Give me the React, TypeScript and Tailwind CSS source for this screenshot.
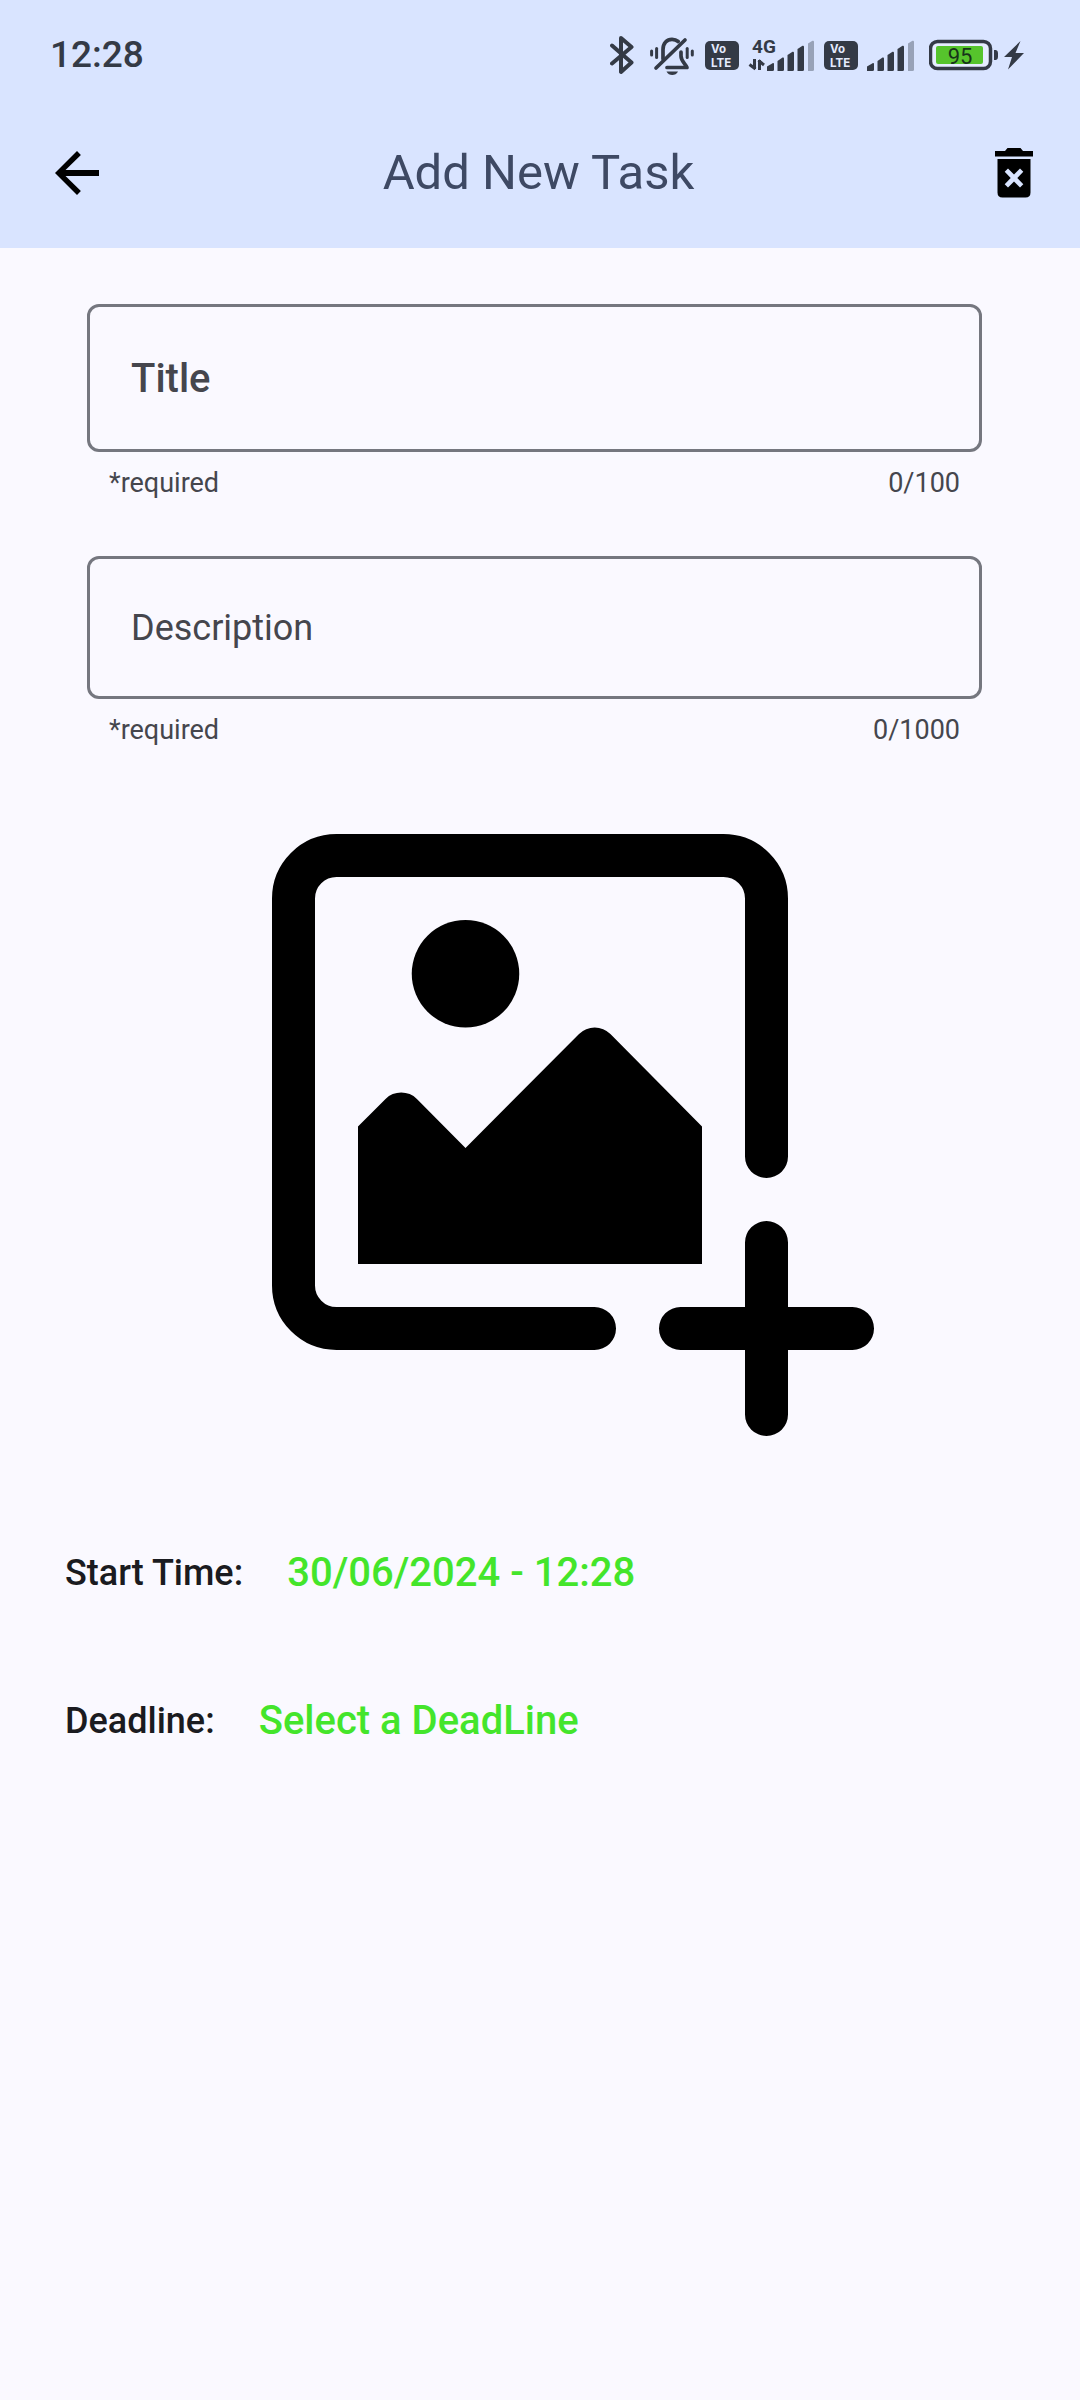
import React, { useState } from "react";

const INK = "#343a46";

function BluetoothIcon() {
  return (
    <svg className="h-12 w-6 shrink-0" viewBox="0 0 24 48" fill="none" stroke={INK} strokeWidth="4" strokeLinejoin="round" strokeLinecap="round" aria-hidden="true">
      <path d="M2 14.500L21.500 31.500L11 41V7L21.500 16L2 32.500" />
    </svg>
  );
}

function BellOffIcon() {
  return (
    <svg className="ml-4 h-12 w-11 shrink-0" viewBox="0 0 44 48" fill="none" stroke={INK} strokeLinecap="round" aria-hidden="true">
      <g strokeWidth="3.700">
        <path d="M13 28V18.500C13 12 17 8.300 22 8.300C24.500 8.300 26.500 9 28.200 10.500" />
        <path d="M31 21V25C31 30 35 32.500 37 36.500H17" strokeLinejoin="round" />
        <path d="M35 9L6 37" />
      </g>
      <path d="M16.500 40.500H28C27 43 24.500 44 22.200 44C20 44 17.500 43 16.500 40.500Z" fill={INK} stroke="none" />
      <g strokeWidth="3">
        <path d="M1.600 20V24" />
        <path d="M6.600 17.500V26.500" />
        <path d="M37.200 17.500V26.500" />
        <path d="M42.300 20V24" />
      </g>
    </svg>
  );
}

function VolteIcon({ className }: { className: string }) {
  return (
    <svg className={className} viewBox="0 0 34 48" aria-label="VoLTE">
      <rect x="0" y="10" width="34" height="29" rx="5" fill={INK} />
      <g fill="#e4ebff" fontFamily="Inter, sans-serif" fontWeight="700" fontSize="11.500">
        <text x="6" y="22">Vo</text>
        <text x="6" y="36">LTE</text>
      </g>
    </svg>
  );
}

function Bars() {
  return (
    <g fill={INK}>
      <path d="M0 40V35.500L6 32Q7 31.800 7 33V38.500Q7 40 5.500 40Z" />
      <path d="M10.500 40V30L15.500 26.500Q17 26 17 27.500V38.500Q17 40 15.500 40Z" />
      <path d="M20.500 40V24L25.500 20.800Q27 20.300 27 22V38.500Q27 40 25.500 40Z" />
      <path d="M30.500 40V18L35.500 14.800Q37 14.300 37 16V38.500Q37 40 35.500 40Z" />
      <path d="M41 40V12.500L45.500 9.800Q47 9.300 47 11V38.500Q47 40 45.500 40Z" fill="#98a2b8" />
    </g>
  );
}

function MobileDataIcon() {
  return (
    <svg className="ml-[9px] h-12 w-[67px] shrink-0" viewBox="0 0 67 48" aria-label="4G signal">
      <text x="4" y="22" fontSize="19" fontFamily="Roboto, sans-serif" fontWeight="700" fill={INK}>4G</text>
      <g fill="none" stroke={INK} strokeWidth="3">
        <path d="M6.500 28V38M7.500 38L1.500 33.500" />
        <path d="M11.500 39V29M10.500 29.500L16 34" />
      </g>
      <g transform="translate(19 0)">
        <Bars />
      </g>
    </svg>
  );
}

function SignalIcon() {
  return (
    <svg className="ml-[9px] h-12 w-[47px] shrink-0" viewBox="0 0 47 48" aria-label="Signal">
      <Bars />
    </svg>
  );
}

function BatteryIcon() {
  return (
    <svg className="ml-[15px] h-12 w-[70px] shrink-0" viewBox="0 0 70 48" aria-label="Battery 95 percent">
      <rect x="1.500" y="10.500" width="60" height="27" rx="7" fill="#e6edff" stroke={INK} strokeWidth="3.500" />
      <rect x="7" y="15" width="47" height="18" rx="2" fill="#56c42c" />
      <path d="M65 19H67Q69 19.500 69 22V26Q69 28.500 67 29H65Z" fill={INK} />
      <text x="31" y="32.500" fontSize="22" textAnchor="middle" fontFamily="Roboto, sans-serif" fontWeight="400" fill="#16351a">95</text>
    </svg>
  );
}

function BoltIcon() {
  return (
    <svg className="ml-[5px] h-12 w-5 shrink-0" viewBox="0 0 20 48" aria-hidden="true">
      <path d="M16.500 10L0 26H8L4 38.500L20 22H11.500Z" fill={INK} />
    </svg>
  );
}

function TrashIcon() {
  return (
    <svg className="h-[50px] w-[38px]" viewBox="0 0 38 50" aria-hidden="true">
      <path d="M0 3H10L12.500 0H25.500L28 3H38V8.500H0Z" />
      <path fillRule="evenodd" d="M2.500 11H35.500V44.500Q35.500 49.500 30.500 49.500H7.500Q2.500 49.500 2.500 44.500ZM13 20.500L9.700 23.800L15.700 30L9.700 36.200L13 39.500L19 33.500L25 39.500L28.300 36.200L22.300 30L28.300 23.800L25 20.500L19 26.500Z" />
    </svg>
  );
}

function AddImageIcon() {
  return (
    <svg className="h-auto w-full" viewBox="0 0 14 14" aria-hidden="true">
      <g fill="none" stroke="#000" strokeWidth="1" strokeLinecap="round">
        <path d="M7.500 11.500H1.500A1 1 0 0 1 .5 10.500V1.500A1 1 0 0 1 1.500 .5H10.500A1 1 0 0 1 11.500 1.500V7.500" />
        <path d="M11.500 9.500V13.500M9.500 11.500H13.500" />
      </g>
      <circle cx="4.500" cy="3.250" r="1.250" />
      <path d="M2 6.800L2.640 6.160A.52 .52 0 0 1 3.370 6.160L4.500 7.300L7.140 4.650A.52 .52 0 0 1 7.870 4.650L10 6.800V10H2Z" />
    </svg>
  );
}

type FieldProps = {
  label: string;
  limit: number;
  inputClass: string;
};

function TextField({ label, limit, inputClass }: FieldProps) {
  const [value, setValue] = useState("");
  return (
    <div>
      <input
        type="text"
        aria-label={label}
        required
        maxLength={limit}
        placeholder={label}
        value={value}
        onChange={(e) => setValue(e.target.value)}
        className={inputClass}
      />
      <div className="mt-3 flex justify-between px-[22px] text-[27px] leading-[38px] text-[#45464d]">
        <span>*required</span>
        <span>{value.length}/{limit}</span>
      </div>
    </div>
  );
}

function TimeRow({ label, value }: { label: string; value: string }) {
  return (
    <div className="flex items-center gap-11 font-medium">
      <span className="text-[36px] leading-12 text-[#1a1b20]">{label}</span>
      <button type="button" className="text-[40px] leading-12 text-[#44e52b]">{value}</button>
    </div>
  );
}

export default function App() {
  return (
    <div className="min-h-screen bg-[#faf9ff] font-['Roboto',sans-serif]">
      <header className="bg-[#d9e4ff]">
        <div className="flex h-[109px] items-center justify-between pr-14 pl-[50px]">
          <span className="text-[37px] leading-12 font-medium text-[#343a46]">12:28</span>
          <div className="flex items-center">
            <BluetoothIcon />
            <BellOffIcon />
            <VolteIcon className="ml-[11px] h-12 w-[34px] shrink-0" />
            <MobileDataIcon />
            <VolteIcon className="ml-[9px] h-12 w-[34px] shrink-0" />
            <SignalIcon />
            <BatteryIcon />
            <BoltIcon />
          </div>
        </div>
        <div className="grid h-[139px] grid-cols-[1fr_auto_1fr] items-center pr-[47px] pb-3 pl-11">
          <button type="button" aria-label="Back" className="justify-self-start">
            <svg className="size-[66px]" viewBox="0 0 24 24" aria-hidden="true">
              <path d="M20 10.900H7.830l5.590-5.490L12 4l-8 8 8 8 1.410-1.410L7.830 13.100H20z" />
            </svg>
          </button>
          <h1 className="text-[49px] leading-15 text-[#3e4964]">Add New Task</h1>
          <button type="button" aria-label="Delete task" className="justify-self-end">
            <TrashIcon />
          </button>
        </div>
      </header>

      <main className="pt-14">
        <form className="flex flex-col gap-[54px] pr-[98px] pl-[87px]">
          <TextField
            label="Title"
            limit={100}
            inputClass="block h-[148px] w-full rounded-xl border-3 border-[#75777f] bg-transparent px-[41px] text-[40px] font-medium text-[#1a1b20] outline-none placeholder:text-[#45464d] placeholder:opacity-100"
          />
          <TextField
            label="Description"
            limit={1000}
            inputClass="block h-[143px] w-full rounded-xl border-3 border-[#75777f] bg-transparent px-[41px] text-[36px] text-[#1a1b20] outline-none placeholder:text-[#45464d] placeholder:opacity-100"
          />
        </form>

        <div className="mt-[85px] flex justify-center pl-[66px]">
          <button type="button" aria-label="Add image" className="block w-[602px]">
            <AddImageIcon />
          </button>
        </div>

        <section className="mt-[113px] flex flex-col gap-25 px-[65px]">
          <TimeRow label="Start Time:" value="30/06/2024 - 12:28" />
          <TimeRow label="Deadline:" value="Select a DeadLine" />
        </section>
      </main>
    </div>
  );
}
